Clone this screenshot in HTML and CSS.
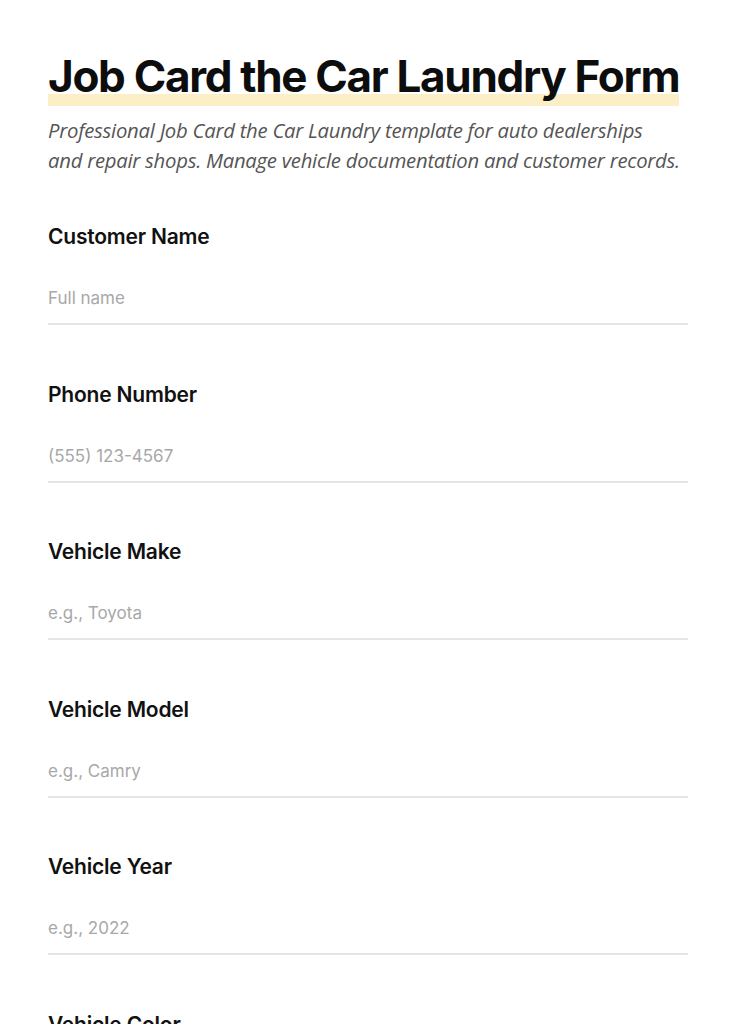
FILE: index.html
```html
<!DOCTYPE html>
<html lang="en">
<head>
<meta charset="utf-8">
<title>Job Card the Car Laundry Form</title>
<link rel="stylesheet" href="styles.css">
</head>
<body>
<main class="page">
  <header class="intro">
    <h1 class="title"><span class="title-mark">Job Card the Car Laundry Form</span></h1>
    <p class="subtitle">Professional Job Card the Car Laundry template for auto dealerships and repair shops. Manage vehicle documentation and customer records.</p>
  </header>
  <form class="form">
    <div class="field">
      <label class="label" for="name">Customer Name</label>
      <input class="input" id="name" type="text" placeholder="Full name">
    </div>
    <div class="field">
      <label class="label" for="phone">Phone Number</label>
      <input class="input" id="phone" type="tel" placeholder="(555) 123-4567">
    </div>
    <div class="field">
      <label class="label" for="make">Vehicle Make</label>
      <input class="input" id="make" type="text" placeholder="e.g., Toyota">
    </div>
    <div class="field">
      <label class="label" for="model">Vehicle Model</label>
      <input class="input" id="model" type="text" placeholder="e.g., Camry">
    </div>
    <div class="field">
      <label class="label" for="year">Vehicle Year</label>
      <input class="input" id="year" type="text" placeholder="e.g., 2022">
    </div>
    <div class="field">
      <label class="label" for="color">Vehicle Color</label>
      <input class="input" id="color" type="text" placeholder="e.g., Silver">
    </div>
  </form>
</main>
</body>
</html>
```
FILE: styles.css
```css
html, body {
  margin: 0;
  padding: 0;
  background: #ffffff;
}
body {
  font-family: Inter, "Noto Sans", sans-serif;
  color: #111111;
}
.page {
  padding: 50px 48px 0 48px;
}
.intro {
  margin-bottom: 48px;
}
.title {
  margin: 0;
  font-size: 44px;
  line-height: 53px;
  font-weight: 700;
  letter-spacing: -1.3px;
  color: #0d0d0d;
}
.title-mark {
  padding-bottom: 3px;
  background-image: linear-gradient(#fcefc6, #fcefc6);
  background-repeat: no-repeat;
  background-size: 100% 12px;
  background-position: left bottom;
}
.subtitle {
  margin: 12px 0 0 0;
  max-width: 640px;
  font-family: "Open Sans", "Noto Sans", sans-serif;
  font-style: italic;
  font-size: 20.3px;
  line-height: 30px;
  letter-spacing: -0.25px;
  color: #555555;
  text-wrap: balance;
}
.form {
  display: flex;
  flex-direction: column;
}
.field {
  display: flex;
  flex-direction: column;
  height: 157.5px;
}
.label {
  font-size: 21px;
  line-height: 28px;
  font-weight: 600;
  letter-spacing: -0.2px;
  color: #111111;
}
.input {
  margin-top: 35px;
  padding: 0 0 13px 0;
  border: none;
  border-bottom: 2px solid #e5e5e5;
  font-family: Inter, "Noto Sans", sans-serif;
  font-size: 17px;
  line-height: 24px;
  color: #333;
  background: transparent;
  outline: none;
}
.input::placeholder {
  color: #a8a8a8;
}
```
